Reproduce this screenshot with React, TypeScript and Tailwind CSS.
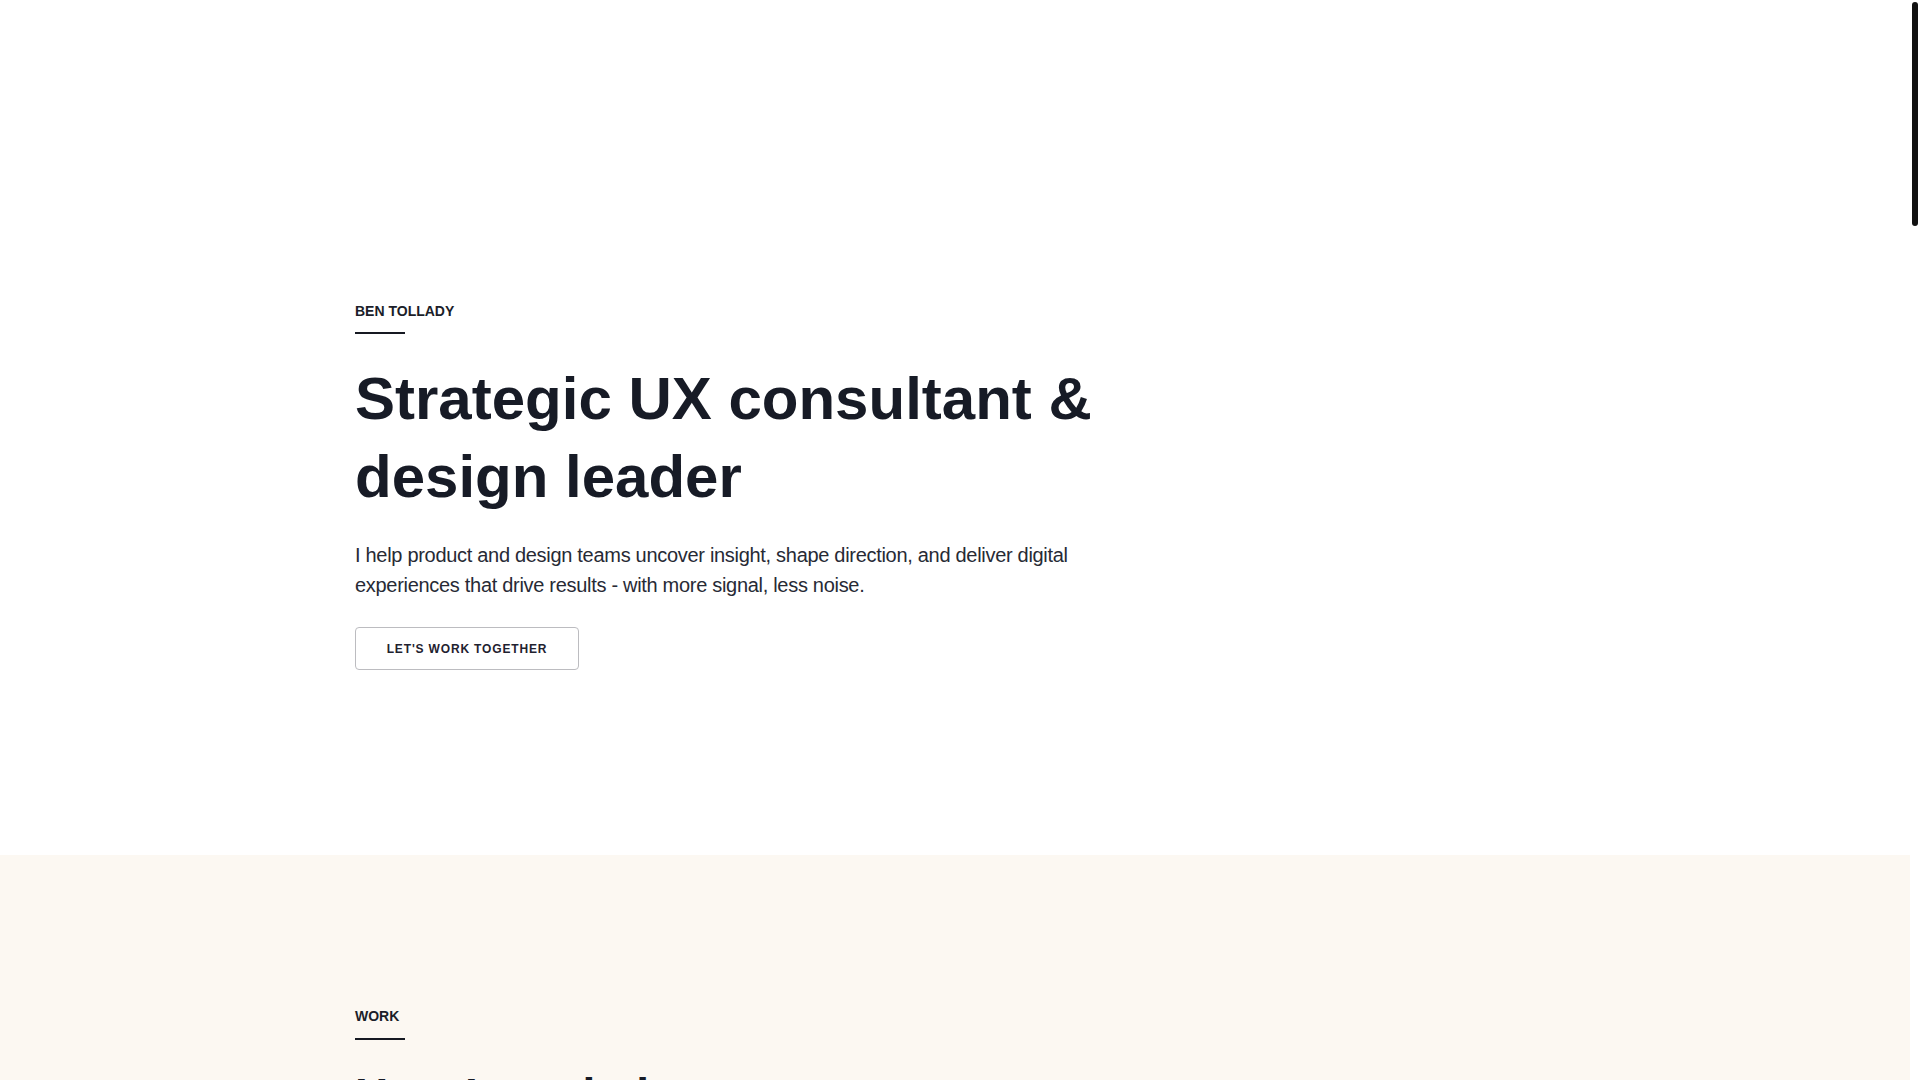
export default function App() {
  return (
    <div className="flex h-screen overflow-hidden bg-white font-['Liberation_Sans',Arial,sans-serif] text-[#171b26]">
      <main className="min-w-0 flex-1">
        {/* Hero */}
        <section className="h-[855px] pt-[301px]">
          <div className="mx-auto max-w-[1200px]">
            <p className="text-sm font-bold leading-5 text-[#1b1e29]">BEN TOLLADY</p>
            <div className="mt-[11px] h-[2px] w-[50px] bg-[#161922]" />
            <div className="max-w-[770px]">
              <h1 className="mt-[26px] text-[60px] font-bold leading-[1.3]">
                Strategic UX consultant &amp; design leader
              </h1>
              <p className="mt-6 text-xl leading-[1.5] tracking-[-0.015em] text-[#272a35]">
                I help product and design teams uncover insight, shape direction, and deliver digital
                experiences that drive results - with more signal, less noise.
              </p>
            </div>
            <button className="mt-[27px] flex h-[43px] w-[224px] items-center justify-center rounded-[4px] border border-[#bcbcc0] bg-white text-[12px] font-bold tracking-[0.07em] text-[#1f2230]">
              LET'S WORK TOGETHER
            </button>
          </div>
        </section>

        {/* Work */}
        <section className="min-h-[4261px] bg-[#fcf8f2] pt-[151px]">
          <div className="mx-auto max-w-[1200px]">
            <p className="text-sm font-bold leading-5 text-[#1b1e29]">WORK</p>
            <div className="mt-3 h-[2px] w-[50px] bg-[#161922]" />
            <h2 className="mt-[26px] text-[46px] font-bold leading-[1.3]">How I can help</h2>
          </div>
        </section>
      </main>

      {/* scrollbar rail */}
      <aside className="w-[10px] shrink-0 bg-white p-[2px]">
        <div className="h-[224px] rounded-full bg-[#111111]" />
      </aside>
    </div>
  )
}
